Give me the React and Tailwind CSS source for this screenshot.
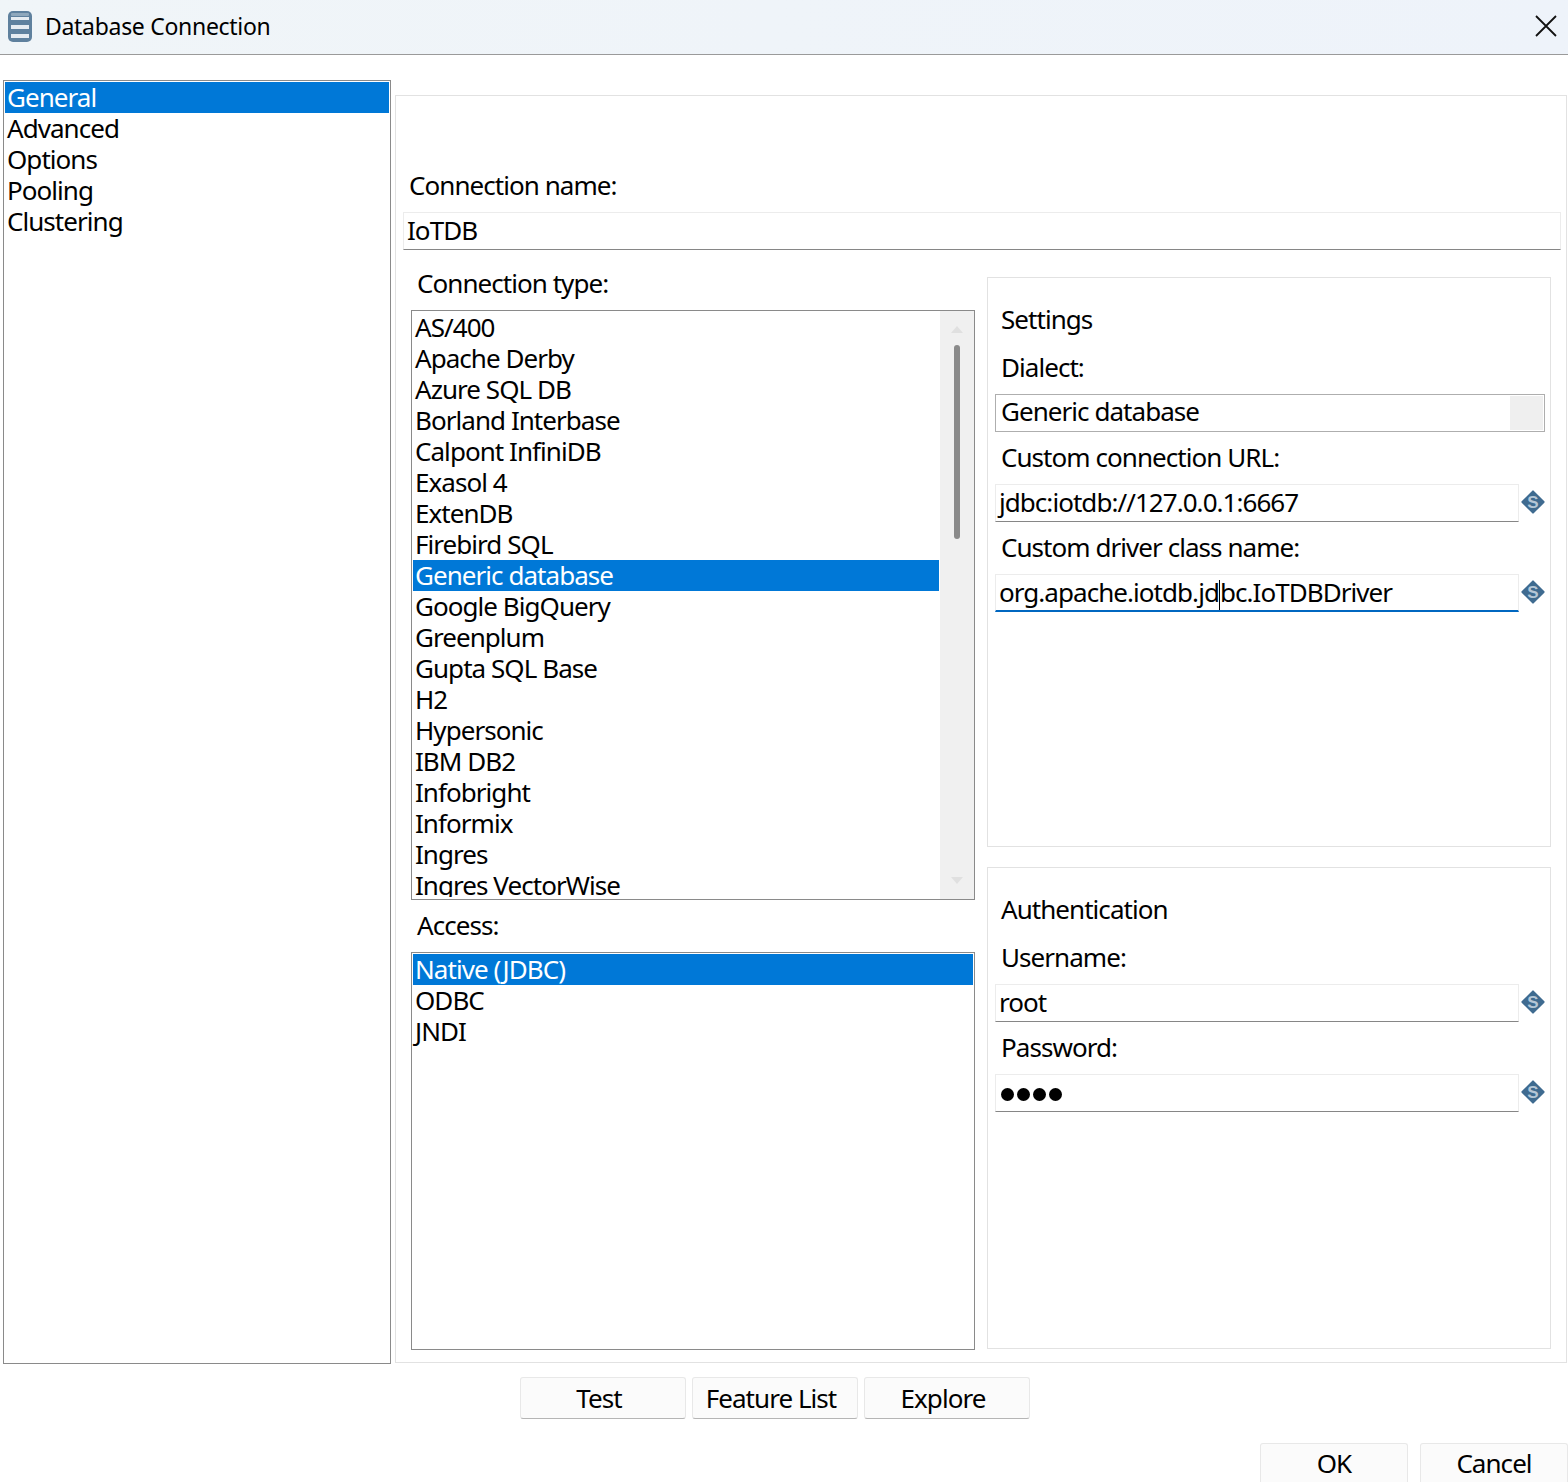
const connectionTypes = [
  'AS/400', 'Apache Derby', 'Azure SQL DB', 'Borland Interbase', 'Calpont InfiniDB', 'Exasol 4',
  'ExtenDB', 'Firebird SQL', 'Generic database', 'Google BigQuery', 'Greenplum', 'Gupta SQL Base',
  'H2', 'Hypersonic', 'IBM DB2', 'Infobright', 'Informix', 'Ingres', 'Ingres VectorWise',
];

function ListRow({ label, selected }) {
  return (
    <div className={`h-[31px] pl-[2px] leading-[31px] whitespace-nowrap ${selected ? 'bg-[#0078d7] text-white' : 'text-black'}`}>
      {label}
    </div>
  );
}

function VarIcon() {
  return (
    <svg width="26" height="26" viewBox="0 0 26 26" className="shrink-0 mb-[2px]">
      <rect x="4.5" y="4.5" width="17" height="17" rx="1" transform="rotate(45 13 13)" fill="#3f6b90" />
      <text x="13" y="19" textAnchor="middle" fontSize="17" fontWeight="700" letterSpacing="0" fill="#b4c6d6" fontFamily="Liberation Sans, sans-serif">S</text>
    </svg>
  );
}

function VarField({ children, focused }) {
  return (
    <div className="flex items-center ml-[7px] mr-[4px] gap-[1px]">
      <div className={`h-[38px] w-[524px] shrink-0 pl-[3px] leading-[35px] border border-[#ececec] whitespace-nowrap ${focused ? 'border-b-2 border-b-[#0067c0]' : 'border-b-[#868686]'}`}>
        {children}
      </div>
      <VarIcon />
    </div>
  );
}

function Label({ children, className = '', leading = 'leading-[31px]' }) {
  return <div className={`h-[31px] ${leading} ${className}`}>{children}</div>;
}

function FormButton({ children, className = '' }) {
  return (
    <button className={`h-[42px] rounded-[3px] border border-[#e8e8e8] border-b-[#b5b5b5] bg-[#fbfbfb] text-black ${className}`}>
      {children}
    </button>
  );
}

export default function App() {
  return (
    <div className="w-[1568px] h-[1482px] overflow-hidden bg-white text-black text-[26px] tracking-[-0.95px] font-['Noto_Sans',sans-serif]">
      {/* Title bar */}
      <div className="h-[55px] flex items-center border-b border-[#9a9a9a] bg-gradient-to-r from-[#f0f5f8] to-[#eef3fa]">
        <svg width="24" height="31" viewBox="0 0 24 31" className="ml-[8px] mb-[1px]">
          <rect x="0" y="0" width="24" height="31" rx="5" fill="#5f819e" />
          <rect x="3" y="2" width="18" height="3" rx="1" fill="#8fa8bc" />
          <rect x="3" y="6" width="18" height="3" fill="#e6ecf1" />
          <rect x="3" y="14" width="18" height="4" fill="#e6ecf1" />
          <rect x="3" y="23" width="18" height="4" fill="#e6ecf1" />
        </svg>
        <span className="ml-[13px] mb-[1px] text-[23px] tracking-[-0.3px]">Database Connection</span>
        <svg width="24" height="24" viewBox="0 0 24 24" className="ml-auto mr-[10px] mb-[3px]" stroke="#111" strokeWidth="1.8" fill="none">
          <path d="M2 2 L22 22 M22 2 L2 22" />
        </svg>
      </div>

      <div className="flex pl-[3px]">
        {/* Page tree */}
        <div className="mt-[25px] w-[388px] h-[1284px] border border-[#8a8a8a] pt-[1px] px-[1px]">
          <ListRow label="General" selected />
          <ListRow label="Advanced" />
          <ListRow label="Options" />
          <ListRow label="Pooling" />
          <ListRow label="Clustering" />
        </div>

        {/* General page */}
        <div className="mt-[40px] ml-[4px] w-[1172px] h-[1268px] border border-[#e2e2e2]">
          <Label className="mt-[74px] ml-[13px]">Connection name:</Label>
          <div className="mt-[11px] ml-[7px] mr-[5px] h-[38px] pl-[3px] leading-[35px] border border-[#ececec] border-b-[#868686]">IoTDB</div>

          <div className="flex mt-[27px] ml-[15px] gap-[12px]">
            <div className="w-[564px] -mt-[8px]">
              <Label className="ml-[6px]" leading="leading-[29px]">Connection type:</Label>
              <div className="flex mt-[10px] h-[590px] border border-[#8a8a8a]">
                <div className="flex-1 mt-[1px] mb-[2px] ml-[1px] overflow-hidden">
                  {connectionTypes.map((t) => (
                    <ListRow key={t} label={t} selected={t === 'Generic database'} />
                  ))}
                </div>
                <div className="w-[34px] bg-[#f0f0f0] flex flex-col items-center justify-between py-[15px] ml-[1px]">
                  <div className="flex-1 flex flex-col items-center">
                    <div className="w-0 h-0 border-x-[6px] border-x-transparent border-b-[7px] border-b-[#e0e0e0]" />
                    <div className="w-[6px] h-[194px] mt-[12px] rounded-[3px] bg-[#8a8a8a]" />
                  </div>
                  <div className="w-0 h-0 border-x-[6px] border-x-transparent border-t-[7px] border-t-[#e0e0e0]" />
                </div>
              </div>

              <Label className="mt-[11px] ml-[6px]" leading="leading-[29px]">Access:</Label>
              <div className="mt-[10px] h-[398px] border border-[#8a8a8a] pt-[1px] px-[1px]">
                <ListRow label="Native (JDBC)" selected />
                <ListRow label="ODBC" />
                <ListRow label="JNDI" />
              </div>
            </div>

            <div className="w-[564px] flex flex-col gap-[20px]">
              <div className="h-[570px] border border-[#e2e2e2] pt-[26px]">
                <Label className="ml-[13px]">Settings</Label>
                <Label className="mt-[17px] ml-[13px]">Dialect:</Label>
                <div className="flex mt-[11px] ml-[7px] mr-[5px] h-[38px] border border-[#aeaeae] p-[1px]">
                  <div className="flex-1 pl-[4px] leading-[31px]">Generic database</div>
                  <div className="w-[33px] bg-[#efefef]" />
                </div>
                <Label className="mt-[10px] ml-[13px]">Custom connection URL:</Label>
                <div className="mt-[11px]">
                  <VarField>jdbc:iotdb://127.0.0.1:6667</VarField>
                </div>
                <Label className="mt-[10px] ml-[13px]">Custom driver class name:</Label>
                <div className="mt-[11px]">
                  <VarField focused>
                    org.apache.iotdb.jd<span className="inline-block w-px h-[30px] bg-black align-middle" />bc.IoTDBDriver
                  </VarField>
                </div>
              </div>

              <div className="h-[482px] border border-[#e2e2e2] pt-[26px]">
                <Label className="ml-[13px]">Authentication</Label>
                <Label className="mt-[17px] ml-[13px]">Username:</Label>
                <div className="mt-[11px]">
                  <VarField>root</VarField>
                </div>
                <Label className="mt-[10px] ml-[13px]">Password:</Label>
                <div className="mt-[11px]">
                  <VarField>
                    <div className="flex items-center gap-[3px] h-full pl-[2px] pt-[3px]">
                      <span className="w-[13px] h-[13px] rounded-full bg-black" />
                      <span className="w-[13px] h-[13px] rounded-full bg-black" />
                      <span className="w-[13px] h-[13px] rounded-full bg-black" />
                      <span className="w-[13px] h-[13px] rounded-full bg-black" />
                    </div>
                  </VarField>
                </div>
              </div>
            </div>
          </div>
        </div>
      </div>

      {/* Connection buttons */}
      <div className="flex mt-[13px] ml-[520px] gap-[6px]">
        <FormButton className="w-[166px] pr-[8px]">Test</FormButton>
        <FormButton className="w-[166px] pr-[8px]">Feature List</FormButton>
        <FormButton className="w-[166px] pr-[8px]">Explore</FormButton>
      </div>

      <div className="flex justify-end mt-[24px] gap-[12px]">
        <FormButton className="w-[148px] pb-[4px]">OK</FormButton>
        <FormButton className="w-[148px] pb-[4px]">Cancel</FormButton>
      </div>
    </div>
  );
}
